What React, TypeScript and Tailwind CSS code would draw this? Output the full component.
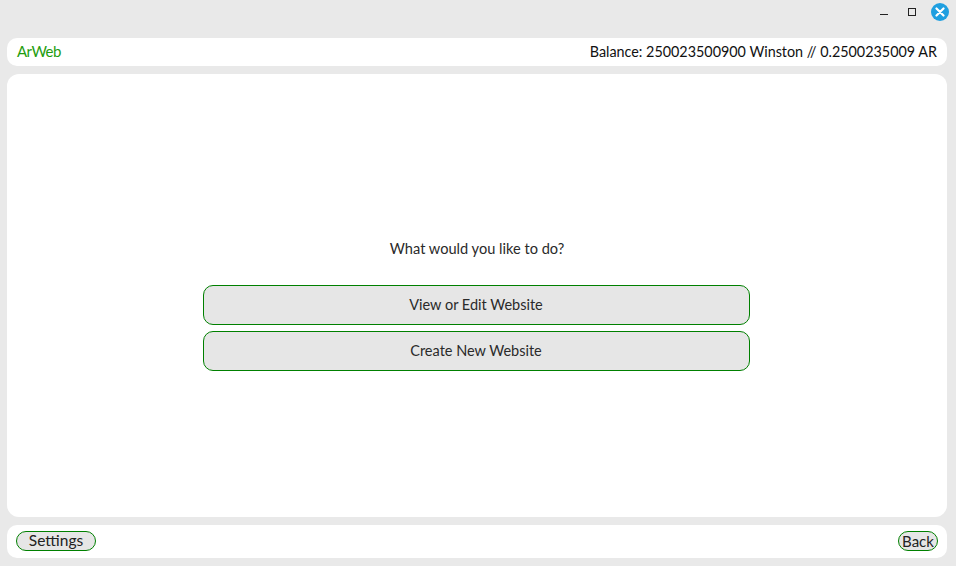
import React from 'react';

const font = "font-['Lato','Noto_Sans',sans-serif]";

const TitleBar: React.FC = () => (
    <div className="h-[38px] flex-shrink-0 flex items-start justify-end pt-[3px]">
        <div className="h-[18px] flex items-center mr-[-2px]">
            <div className="w-[8px] h-px mr-[20px] mt-[5px] bg-[#222222]"></div>
            <div className="w-[8px] h-[8px] mr-[15px] border border-[#222222]"></div>
            <div className="w-[18px] h-[18px] rounded-full bg-[#1f9fe0] flex items-center justify-center">
                <svg className="w-[10px] h-[10px]" viewBox="0 0 10 10" fill="none" stroke="white" strokeWidth={2.2} strokeLinecap="round">
                    <path d="M1.5 1.5l7 7M8.5 1.5l-7 7" />
                </svg>
            </div>
        </div>
    </div>
);

const MenuButton: React.FC<{ label: string }> = ({ label }) => (
    <button className="w-[547px] h-10 rounded-[10px] border border-[#008000] bg-[#e6e6e6] text-[14.5px] text-[#2a2a2a]">
        {label}
    </button>
);

const App: React.FC = () => {
    return (
        <div className={`w-[956px] h-[566px] bg-[#e9e9e9] flex flex-col pl-[7px] pr-[9px] overflow-hidden ${font}`}>
            <TitleBar />
            <header className="h-7 flex-shrink-0 bg-white rounded-[10px] px-[10px] pb-px flex items-center justify-between">
                <span className="text-[15px] tracking-[-0.5px] text-[#1f9d0f]">ArWeb</span>
                <span className="text-[14.35px] text-[#111111]">Balance: 250023500900 Winston // 0.2500235009 AR</span>
            </header>
            <main className="mt-2 h-[443px] flex-shrink-0 bg-white rounded-[12px] flex flex-col items-center pt-[164px]">
                <p className="text-[14.6px] leading-[22px] text-[#2a2a2a]">What would you like to do?</p>
                <div className="mt-[25px] flex flex-col gap-[6px] ml-[-2px]">
                    <MenuButton label="View or Edit Website" />
                    <MenuButton label="Create New Website" />
                </div>
            </main>
            <footer className="mt-2 h-[33px] flex-shrink-0 bg-white rounded-[10px] px-[9px] pt-[6px] flex items-start justify-between text-[#222222]">
                <button className="w-20 h-5 rounded-[10px] border border-[#008000] bg-[#e6e6e6] text-[15.5px] leading-none">Settings</button>
                <button className="w-10 h-5 rounded-[10px] border border-[#008000] bg-[#e6e6e6] text-[15px] leading-none">Back</button>
            </footer>
        </div>
    );
};

export default App;
